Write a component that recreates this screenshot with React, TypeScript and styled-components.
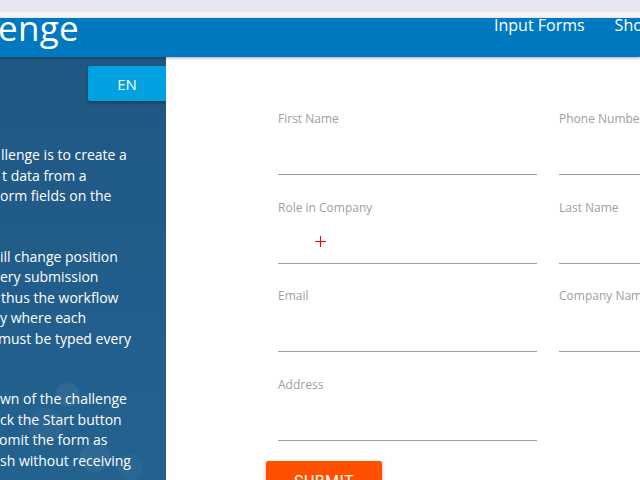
import styled, { createGlobalStyle } from 'styled-components';

const GlobalStyle = createGlobalStyle`
  html, body {
    margin: 0;
    padding: 0;
    width: 640px;
    height: 480px;
    overflow: hidden;
    background: #ffffff;
    font-family: "Open Sans", "Noto Sans", sans-serif;
  }
`;

const Page = styled.div`
  display: flex;
  flex-direction: column;
  width: 640px;
  height: 480px;
  overflow: hidden;
`;

const TopStrip = styled.div`
  height: 18px;
  flex: 0 0 18px;
  background: linear-gradient(#e6e7f2 0, #e6e7f2 12px, #f5f5fa 12px, #f5f5fa 18px);
`;

const Header = styled.header`
  display: flex;
  align-items: flex-start;
  flex: 0 0 39px;
  height: 39px;
  background: #0079c1;
  box-shadow: 0 1px 3px rgba(0, 0, 0, 0.35);
  overflow: hidden;
  white-space: nowrap;
  position: relative;
  z-index: 1;
`;

const Logo = styled.div`
  flex: 0 0 496px;
  color: #ffffff;
  font-size: 35px;
  line-height: 30px;
  margin-left: -2px;
  margin-top: -5px;
  letter-spacing: 0.3px;
`;

const Nav = styled.nav`
  display: flex;
  gap: 30px;
  margin-top: -3px;
`;

const NavLink = styled.span`
  color: #ffffff;
  font-size: 16px;
  line-height: 20px;
`;

const Body = styled.div`
  display: flex;
  flex: 1;
  min-height: 0;
`;

const Sidebar = styled.aside`
  flex: 0 0 166px;
  display: flex;
  flex-direction: column;
  padding-top: 9px;
  overflow: hidden;
  background:
    radial-gradient(circle at 68px 338px, rgba(255, 255, 255, 0.06) 0, rgba(255, 255, 255, 0.06) 11px, transparent 13px),
    radial-gradient(circle at 45px 368px, rgba(255, 255, 255, 0.04) 0, rgba(255, 255, 255, 0.04) 16px, transparent 18px),
    radial-gradient(circle at 95px 400px, rgba(255, 255, 255, 0.05) 0, rgba(255, 255, 255, 0.05) 14px, transparent 16px),
    radial-gradient(circle at 130px 410px, rgba(255, 255, 255, 0.03) 0, rgba(255, 255, 255, 0.03) 12px, transparent 14px),
    linear-gradient(180deg, #1f5782 0%, #215c89 40%, #23628f 100%);
`;

const LangButton = styled.button`
  align-self: flex-end;
  width: 78px;
  height: 35px;
  border: none;
  border-radius: 2px 0 0 2px;
  background: #00a2e1;
  color: #ffffff;
  font-family: inherit;
  font-size: 15px;
  box-shadow: 0 2px 3px rgba(0, 0, 0, 0.3);
  padding: 0;
`;

const Intro = styled.div`
  display: flex;
  flex-direction: column;
  gap: 19.5px;
  margin-top: 44px;
`;

const Paragraph = styled.p`
  margin: 0;
  color: #ffffff;
  font-size: 14px;
  font-weight: 500;
  line-height: 20.5px;
  white-space: nowrap;
`;

const Line = styled.span<{ $shift?: number }>`
  display: block;
  height: 20.5px;
  margin-left: ${(p) => p.$shift ?? 0}px;
`;

const Main = styled.main`
  flex: 1;
  padding: 54px 0 0 112px;
  overflow: hidden;
  position: relative;
`;

const FormGrid = styled.div`
  display: grid;
  grid-template-columns: 259px 259px;
  column-gap: 22px;
  row-gap: 24.5px;
`;

const Field = styled.label`
  display: flex;
  flex-direction: column;
  position: relative;
`;

const FieldLabel = styled.span`
  color: #a0a0a0;
  font-size: 12px;
  line-height: 16px;
  white-space: nowrap;
`;

const FieldInput = styled.div`
  height: 47px;
  border-bottom: 1px solid #9e9e9e;
`;

const Crosshair = styled.span`
  position: absolute;
  left: 37px;
  top: 36px;
  width: 11px;
  height: 11px;
  &::before,
  &::after {
    content: '';
    position: absolute;
    background: #ff0000;
  }
  &::before {
    left: 0;
    top: 5px;
    width: 11px;
    height: 1px;
  }
  &::after {
    left: 5px;
    top: 0;
    width: 1px;
    height: 11px;
  }
`;

const SubmitButton = styled.button`
  margin: 20px 0 0 -12px;
  width: 116px;
  height: 36px;
  border: none;
  border-radius: 2px;
  background: #ff5000;
  color: #ffffff;
  font-family: Roboto, "Liberation Sans", sans-serif;
  font-size: 16px;
  letter-spacing: 0.4px;
  padding: 6px 0 0;
  box-shadow: 0 2px 4px rgba(0, 0, 0, 0.3);
  align-self: flex-start;
`;

const Form = styled.form`
  display: flex;
  flex-direction: column;
`;

type FieldDef = { label: string; cursor?: boolean } | null;

const fields: FieldDef[] = [
  { label: 'First Name' },
  { label: 'Phone Number' },
  { label: 'Role in Company', cursor: true },
  { label: 'Last Name' },
  { label: 'Email' },
  { label: 'Company Name' },
  { label: 'Address' },
  null,
];

const paragraphs: { text: string; shift?: number }[][] = [
  [{ text: 'llenge is to create a', shift: 1 }, { text: 't data from a', shift: 2 }, { text: 'orm fields on the', shift: 0 }, { text: '' }],
  [
    { text: 'ill change position', shift: 0 },
    { text: 'ery submission', shift: 0 },
    { text: 'thus the workflow', shift: 1 },
    { text: 'y where each', shift: 0 },
    { text: 'must be typed every', shift: -2 },
    { text: '' },
  ],
  [
    { text: 'wn of the challenge', shift: 0 },
    { text: 'ck the Start button', shift: 0 },
    { text: 'omit the form as', shift: -1 },
    { text: 'sh without receiving', shift: 0 },
  ],
];

export function App() {
  return (
    <>
      <GlobalStyle />
      <Page>
        <TopStrip />
        <Header>
          <Logo>enge</Logo>
          <Nav>
            <NavLink>Input Forms</NavLink>
            <NavLink>Shortest Path</NavLink>
          </Nav>
        </Header>
        <Body>
          <Sidebar>
            <LangButton>EN</LangButton>
            <Intro>
              {paragraphs.map((lines, i) => (
                <Paragraph key={i}>
                  {lines.map((l, j) => (
                    <Line key={j} $shift={l.shift}>
                      {l.text}
                    </Line>
                  ))}
                </Paragraph>
              ))}
            </Intro>
          </Sidebar>
          <Main>
            <Form>
              <FormGrid>
                {fields.map((f, i) =>
                  f ? (
                    <Field key={i}>
                      <FieldLabel>{f.label}</FieldLabel>
                      <FieldInput />
                      {f.cursor && <Crosshair />}
                    </Field>
                  ) : (
                    <div key={i} />
                  ),
                )}
              </FormGrid>
              <SubmitButton type="button">SUBMIT</SubmitButton>
            </Form>
          </Main>
        </Body>
      </Page>
    </>
  );
}

export default App;
